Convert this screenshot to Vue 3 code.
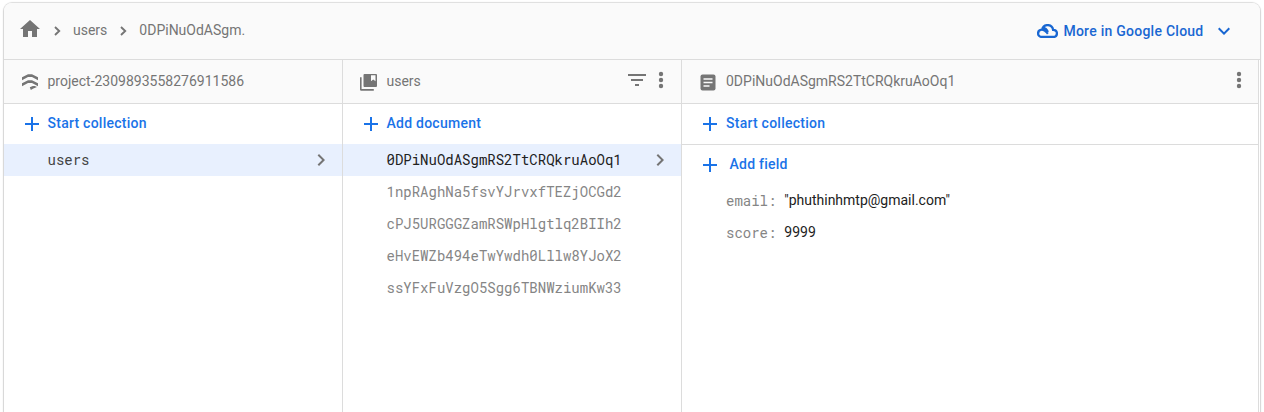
<script setup>
const documents = [
  '0DPiNuOdASgmRS2TtCRQkruAoOq1',
  '1npRAghNa5fsvYJrvxfTEZjOCGd2',
  'cPJ5URGGGZamRSWpHlgtlq2BIIh2',
  'eHvEWZb494eTwYwdh0Lllw8YJoX2',
  'ssYFxFuVzgO5Sgg6TBNWziumKw33',
]
const fields = [
  { name: 'email', value: '"phuthinhmtp@gmail.com"' },
  { name: 'score', value: '9999' },
]
</script>

<template>
  <main class="page">
    <section class="card">
      <header class="topbar">
        <nav class="crumbs">
          <svg class="home" viewBox="0 0 24 24"><path d="M10 20v-6h4v6h5v-8h3L12 3 2 12h3v8z" /></svg>
          <svg class="sep first" viewBox="0 0 7 10"><path d="M1 1l4.200 4L1 9" /></svg>
          <span>users</span>
          <svg class="sep second" viewBox="0 0 7 10"><path d="M1 1l4.200 4L1 9" /></svg>
          <span>0DPiNuOdASgm.</span>
        </nav>
        <button class="cloud-link">
          <svg class="cloud" viewBox="0 0 21 14">
            <path d="M5 6.100C5.600 3 7.700 1.100 10.600 1.100c3 0 5 1.900 5.500 4.700 2.400.1 3.800 1.500 3.800 3.500 0 2.200-1.500 3.700-3.800 3.700H5.200C2.700 13 1.100 11.500 1.100 9.400 1.100 7.400 2.500 5.900 4.700 5.700c3.300-.2 4 1.500 6.200 4.100M6.500 3.800c2.200.2 3.300 1.900 4.400 4.200" />
          </svg>
          <span>More in Google Cloud</span>
          <svg class="expand" viewBox="0 0 24 24"><path d="M16.590 8.590 12 13.170 7.410 8.590 6 10l6 6 6-6z" /></svg>
        </button>
      </header>

      <div class="columns">
        <div class="column">
          <div class="panel-head">
            <svg class="kind root" viewBox="0 0 16 16">
              <path d="M0 3.300 6 .3h4l6 3v2.900L10 3H6L0 6.200zM0 9.300l6-3h4l6 3v2.900L10 9H6l-6 3.200zM7.800 13.300l3-1.300h2l2.200.9-3.600 1.600L8.800 16z" />
            </svg>
            <span>project-2309893558276911586</span>
          </div>
          <div class="action">
            <svg class="plus" viewBox="0 0 14 14"><path d="M7 0v14M0 7h14" /></svg>
            <span>Start collection</span>
          </div>
          <div class="row selected muted">
            <span>users</span>
            <svg class="arrow" viewBox="0 0 24 24"><path d="M10 6 8.590 7.410 13.170 12l-4.580 4.590L10 18l6-6z" /></svg>
          </div>
        </div>

        <div class="column">
          <div class="panel-head">
            <svg class="kind coll" viewBox="0 0 17 17">
              <path fill-rule="evenodd" d="M4.500 0H16a1 1 0 0 1 1 1v11a1 1 0 0 1-1 1H4.500a1 1 0 0 1-1-1V1a1 1 0 0 1 1-1zM11 1.200v6l2.200-1.600 2.300 1.600v-6zM0 3.300h1.600v11.800h12.200v1.600H1.200A1.200 1.200 0 0 1 0 15.500z" />
            </svg>
            <span>users</span>
            <div class="tools">
              <svg class="tool" viewBox="0 0 24 24"><path d="M10 18h4v-2h-4zM3 6v2h18V6zm3 7h12v-2H6z" /></svg>
              <svg class="tool" viewBox="0 0 24 24"><circle cx="12" cy="6" r="2.200" /><circle cx="12" cy="12" r="2.200" /><circle cx="12" cy="18" r="2.200" /></svg>
            </div>
          </div>
          <div class="action">
            <svg class="plus" viewBox="0 0 14 14"><path d="M7 0v14M0 7h14" /></svg>
            <span>Add document</span>
          </div>
          <div v-for="(id, i) in documents" :key="id" class="row" :class="{ selected: i === 0 }">
            <span>{{ id }}</span>
            <svg v-if="i === 0" class="arrow" viewBox="0 0 24 24"><path d="M10 6 8.590 7.410 13.170 12l-4.580 4.590L10 18l6-6z" /></svg>
          </div>
        </div>

        <div class="column detail">
          <div class="panel-head">
            <svg class="kind doc" viewBox="0 0 16 17">
              <rect x=".5" y=".5" width="15" height="16" rx="2" />
              <path d="M3.500 5h9M3.500 8.500h9M3.500 12h6" />
            </svg>
            <span>0DPiNuOdASgmRS2TtCRQkruAoOq1</span>
            <div class="tools">
              <svg class="tool" viewBox="0 0 24 24"><circle cx="12" cy="6" r="2.200" /><circle cx="12" cy="12" r="2.200" /><circle cx="12" cy="18" r="2.200" /></svg>
            </div>
          </div>
          <div class="action divided">
            <svg class="plus" viewBox="0 0 14 14"><path d="M7 0v14M0 7h14" /></svg>
            <span>Start collection</span>
          </div>
          <div class="action add-field">
            <svg class="plus" viewBox="0 0 14 14"><path d="M7 0v14M0 7h14" /></svg>
            <span>Add field</span>
          </div>
          <div v-for="f in fields" :key="f.name" class="field">
            <span class="key">{{ f.name }}:</span>
            <span class="value">{{ f.value }}</span>
          </div>
        </div>
      </div>
    </section>
  </main>
</template>

<style>
body { margin: 0; background: #fff; overflow: hidden; }
</style>

<style scoped>
* { box-sizing: border-box; }
.page {
  height: 412px;
  padding: 3px 4px 0;
  overflow: hidden;
  font: 14px/20px Roboto, "Liberation Sans", sans-serif;
  color: #757575;
}
.card {
  width: 1256px;
  height: 440px;
  display: flex;
  flex-direction: column;
  background: #fff;
  border-radius: 8px;
  overflow: hidden;
  box-shadow: 0 0 1px 1px rgba(0, 0, 0, .13), 0 1px 2px rgba(0, 0, 0, .16);
}
svg { display: block; flex: none; fill: currentColor; }
.topbar {
  height: 57px;
  flex: none;
  display: flex;
  justify-content: space-between;
  background: #fafafa;
  border-bottom: 1px solid #dcdcdc;
}
.crumbs { display: flex; align-items: center; padding-left: 13.500px; height: 54px; }
.home { width: 24px; height: 24px; margin-top: -2px; }
.sep { width: 7px; height: 10px; fill: none; stroke: currentColor; stroke-width: 1.900; }
.first { margin: 2px 12px 0 12.500px; }
.second { margin: 2px 12px 0 13px; }
.cloud-link {
  display: flex;
  align-items: center;
  height: 56px;
  margin-right: 24.500px;
  padding: 0;
  border: 0;
  background: none;
  font: 500 14px/20px Roboto, "Liberation Sans", sans-serif;
  letter-spacing: .25px;
  color: #1967d2;
}
.cloud { width: 21px; height: 14px; margin-right: 5px; fill: none; stroke: currentColor; stroke-width: 2.300; }
.expand { width: 24px; height: 24px; margin-left: 8px; }
.columns { flex: 1; display: grid; grid-template-columns: 339px 339px 577px; }
.column { border-right: 1px solid #dcdcdc; }
.panel-head {
  height: 44px;
  display: flex;
  align-items: center;
  padding: 0 8px 2px 18px;
  background: #fafafa;
  border-bottom: 1px solid #dcdcdc;
}
.kind { margin-top: 3px; }
.root { width: 16px; height: 16px; margin-right: 9.500px; }
.coll { width: 17px; height: 17px; margin-left: -1px; margin-right: 9.500px; }
.doc { width: 16px; height: 17px; margin-right: 10px; }
.doc path { fill: none; stroke: #fafafa; stroke-width: 1.5; }
.tools { display: flex; margin-left: auto; margin-top: -1px; }
.tool { width: 24px; height: 24px; }
.detail .tools { margin-right: -.500px; }
.action {
  height: 40px;
  display: flex;
  align-items: center;
  padding: 0 0 2px 21px;
  color: #1a73e8;
  font-weight: 500;
  letter-spacing: .25px;
}
.plus { width: 14px; height: 14px; margin: 2px 8.500px 0 0; fill: none; stroke: currentColor; stroke-width: 2; }
.divided { height: 41px; border-bottom: 1px solid #dcdcdc; }
.detail .plus { margin-right: 9px; }
.detail .add-field .plus { margin-right: 12.500px; }
.row {
  height: 32px;
  display: flex;
  align-items: center;
  padding: 0 9px 0 43.500px;
  font: 14px/20px "Roboto Mono", "DejaVu Sans Mono", monospace;
  color: #858585;
}
.selected { background: #e8f0fe; color: #212121; }
.muted { color: #424242; }
.arrow { width: 24px; height: 24px; margin-left: auto; color: #757575; }
.field { height: 32px; display: flex; align-items: center; padding: 0 0 2px 44px; }
.key { width: 58.300px; font: 14px/20px "Roboto Mono", "DejaVu Sans Mono", monospace; color: #858585; padding-top: 2px; }
.value { color: #212121; }
</style>
